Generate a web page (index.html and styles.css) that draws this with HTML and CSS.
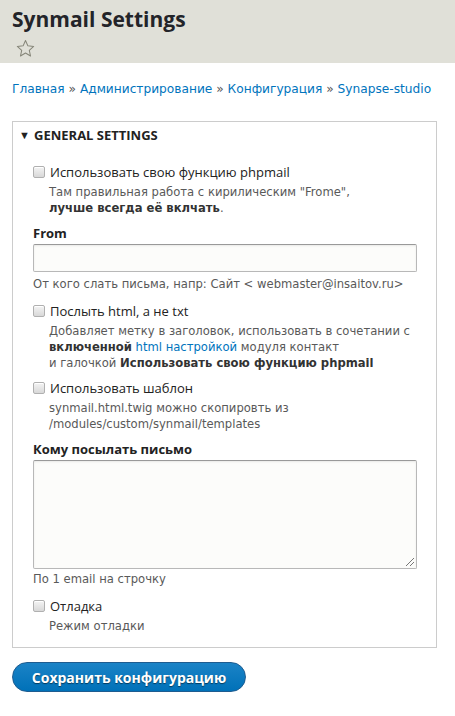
FILE: index.html
```html
<!DOCTYPE html>
<html lang="ru">
<head>
<meta charset="utf-8">
<title>Synmail Settings</title>
<link rel="stylesheet" href="styles.css">
</head>
<body>
<header class="page-header">
  <h1 class="page-title">Synmail Settings</h1>
  <svg class="star" width="19" height="19" viewBox="0 0 20 20"><path d="M10 1.6l2.5 5.6 6.1.6-4.6 4.1 1.3 6-5.3-3.1-5.3 3.1 1.3-6-4.6-4.1 6.1-.6z" fill="none" stroke="#868679" stroke-width="1.1" stroke-linejoin="round"/></svg>
</header>
<nav class="breadcrumb">
  <a href="#">Главная</a> » <a href="#">Администрирование</a> » <a href="#">Конфигурация</a> » <a href="#">Synapse-studio</a>
</nav>
<form class="form">
  <div class="fieldset">
    <div class="summary"><span class="arrow">▼</span>GENERAL SETTINGS</div>
    <div class="fieldset-body">
      <div class="item item-check">
        <label class="check-label"><span class="checkbox"></span>Использовать свою функцию phpmail</label>
        <div class="desc indent">Там правильная работа с кирилическим "Frome",<br><strong>лучше всегда её вклчать</strong>.</div>
      </div>
      <div class="item item-text">
        <label class="field-label">From</label>
        <div class="input"></div>
        <div class="desc">От кого слать письма, напр: Сайт &lt; webmaster@insaitov.ru&gt;</div>
      </div>
      <div class="item item-check">
        <label class="check-label"><span class="checkbox"></span>Послыть html, а не txt</label>
        <div class="desc indent">Добавляет метку в заголовок, использовать в сочетании с<br><strong>включенной</strong> <a href="#">html настройкой</a> модуля контакт<br>и галочкой <strong>Использовать свою функцию phpmail</strong></div>
      </div>
      <div class="item item-check">
        <label class="check-label"><span class="checkbox"></span>Использовать шаблон</label>
        <div class="desc indent">synmail.html.twig можно скопировть из<br>/modules/custom/synmail/templates</div>
      </div>
      <div class="item item-text">
        <label class="field-label">Кому посылать письмо</label>
        <div class="textarea"><span class="grip"></span></div>
        <div class="desc desc-area">По 1 email на строчку</div>
      </div>
      <div class="item item-check item-last">
        <label class="check-label"><span class="checkbox"></span>Отладка</label>
        <div class="desc indent">Режим отладки</div>
      </div>
    </div>
  </div>
  <div class="actions">
    <button type="button" class="button">Сохранить конфигурацию</button>
  </div>
</form>
</body>
</html>
```
FILE: styles.css
```css
html, body {
  margin: 0;
  padding: 0;
  background: #fff;
}
body {
  font-family: "DejaVu Sans", Verdana, sans-serif;
  color: #222330;
  font-size: 13px;
}
a {
  color: #0074bd;
  text-decoration: none;
}
.page-header {
  background: #e0e0d8;
  height: 63px;
  padding: 0 12px;
  box-sizing: border-box;
}
.page-title {
  margin: 0;
  padding-top: 5px;
  font-family: "Open Sans", sans-serif;
  font-weight: 700;
  font-size: 21px;
  line-height: 28px;
  color: #232429;
}
.star {
  display: block;
  margin: 6px 0 0 4px;
}
.breadcrumb {
  padding: 0 12px;
  margin-top: 17px;
  font-size: 12.2px;
  line-height: 18px;
  color: #555;
  white-space: nowrap;
}
.form {
  padding: 0 18px 0 12px;
}
.fieldset {
  margin-top: 23px;
  border: 1px solid #ccc;
}
.summary {
  font-family: "Open Sans", sans-serif;
  font-weight: 700;
  font-size: 13px;
  line-height: 18px;
  padding: 4px 6px 5px;
  color: #222;
}
.arrow {
  font-size: 11px;
  display: inline-block;
  width: 15px;
  vertical-align: 1px;
}
.fieldset-body {
  padding: 14px 19px 13px 20px;
}
.item {
  margin-bottom: 8px;
}
.item-text {
  margin-bottom: 10px;
}
.item-last {
  margin-bottom: 0;
}
.check-label {
  display: flex;
  align-items: center;
  font-family: "Open Sans", sans-serif;
  font-size: 13px;
  line-height: 18px;
  color: #222;
}
.checkbox {
  display: inline-block;
  width: 10px;
  height: 10px;
  border: 1px solid #b0b0b0;
  border-radius: 2px;
  background: linear-gradient(#f4f4f4, #d8d8d8);
  box-shadow: inset 0 1px 0 #fff;
  margin-right: 5px;
  margin-top: -1px;
}
.desc {
  font-size: 11.6px;
  line-height: 16px;
  color: #595959;
  margin-top: 3px;
}
.desc strong {
  color: #333;
}
.indent {
  padding-left: 16px;
}
.field-label {
  display: block;
  font-family: "Open Sans", sans-serif;
  font-weight: 700;
  font-size: 13px;
  line-height: 18px;
  color: #222;
}
.input {
  margin-top: 2px;
  height: 26px;
  border: 1px solid #b8b8b8;
  border-top-color: #999;
  border-radius: 2px;
  background: #fcfcfa;
  box-shadow: inset 0 1px 2px rgba(0,0,0,0.08);
}
.textarea {
  position: relative;
  margin-top: 2px;
  height: 107px;
  border: 1px solid #b8b8b8;
  border-top-color: #999;
  border-radius: 2px;
  background: #fcfcfa;
  box-shadow: inset 0 1px 2px rgba(0,0,0,0.08);
}
.grip {
  position: absolute;
  right: 2px;
  bottom: 2px;
  width: 8px;
  height: 8px;
  background: linear-gradient(135deg, transparent 0 45%, #777 45% 55%, transparent 55% 70%, #777 70% 80%, transparent 80%);
}
.item-text .desc {
  margin-top: 4px;
}
.item-text .desc-area {
  margin-top: 2px;
}
.actions {
  padding: 14px 0;
}
.button {
  font-family: "Open Sans", sans-serif;
  font-weight: 700;
  font-size: 14px;
  color: #fff;
  text-shadow: 0 1px 1px rgba(0,0,0,0.5);
  height: 30px;
  width: 234px;
  border: 1px solid #1e5c90;
  border-radius: 20px;
  background: linear-gradient(#1b83c6, #0071b8);
  padding: 0;
  cursor: pointer;
}
```
